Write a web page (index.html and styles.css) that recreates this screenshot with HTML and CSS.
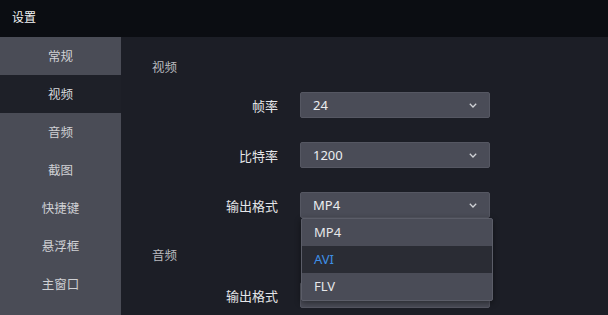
FILE: index.html
```html
<!DOCTYPE html>
<html lang="zh">
<head>
<meta charset="utf-8">
<title>设置</title>
<link rel="stylesheet" href="styles.css">
</head>
<body>
<div class="window">
  <header class="titlebar">设置</header>
  <div class="body">
    <nav class="sidebar">
      <div class="nav-item">常规</div>
      <div class="nav-item active">视频</div>
      <div class="nav-item">音频</div>
      <div class="nav-item">截图</div>
      <div class="nav-item">快捷键</div>
      <div class="nav-item">悬浮框</div>
      <div class="nav-item">主窗口</div>
    </nav>
    <main class="content">
      <section class="section">
        <div class="section-title">视频</div>
        <div class="rows">
          <div class="row">
            <label class="label">帧率</label>
            <div class="select"><span>24</span><svg class="chev" viewBox="0 0 8 5" width="8" height="5"><polyline points="0.8,0.8 4,4 7.2,0.8"/></svg></div>
          </div>
          <div class="row">
            <label class="label">比特率</label>
            <div class="select"><span>1200</span><svg class="chev" viewBox="0 0 8 5" width="8" height="5"><polyline points="0.8,0.8 4,4 7.2,0.8"/></svg></div>
          </div>
          <div class="row">
            <label class="label">输出格式</label>
            <div class="select open"><span>MP4</span><svg class="chev" viewBox="0 0 8 5" width="8" height="5"><polyline points="0.8,0.8 4,4 7.2,0.8"/></svg>
              <ul class="menu">
                <li class="opt">MP4</li>
                <li class="opt hover">AVI</li>
                <li class="opt">FLV</li>
              </ul>
            </div>
          </div>
        </div>
      </section>
      <section class="section second">
        <div class="section-title">音频</div>
        <div class="rows">
          <div class="row">
            <label class="label">输出格式</label>
            <div class="select covered"></div>
          </div>
        </div>
      </section>
    </main>
  </div>
</div>
</body>
</html>
```
FILE: styles.css
```css
* { box-sizing: border-box; }
html, body { margin: 0; padding: 0; }
body {
  width: 608px;
  height: 315px;
  overflow: hidden;
  background: #1c1e26;
  font-family: "Noto Sans", "Noto Sans CJK SC", sans-serif;
  font-size: 13px;
  color: #e2e3e6;
}
.window { display: flex; flex-direction: column; height: 315px; }
.titlebar {
  height: 37px;
  background: #0b0d12;
  color: #f2f2f2;
  font-size: 12px;
  line-height: 35px;
  padding-left: 12px;
  flex: none;
}
.body { display: flex; flex: 1; min-height: 0; }
.sidebar {
  width: 121px;
  flex: none;
  display: flex;
  flex-direction: column;
  background: #4a4c56;
}
.nav-item {
  height: 38px;
  display: flex;
  align-items: center;
  justify-content: center;
  color: #cfd0d4;
  font-size: 12.5px;
  padding-bottom: 2px;
  flex: none;
}
.nav-item.active { background: #1e2028; color: #d8d9dc; }
.content {
  flex: 1;
  padding: 21px 0 0 31px;
  background: #1c1e26;
}
.section-title {
  height: 20px;
  line-height: 20px;
  color: #b9babf;
  font-size: 12.5px;
  margin-bottom: 14px;
}
.rows { display: flex; flex-direction: column; gap: 24px; }
.row { display: flex; align-items: center; gap: 22px; height: 26px; }
.label {
  width: 126px;
  text-align: right;
  color: #e4e5e8;
  font-size: 13px;
}
.select {
  position: relative;
  width: 190px;
  height: 26px;
  background: #4a4c57;
  border: 1px solid #555762;
  border-radius: 2px;
  display: flex;
  align-items: center;
  justify-content: space-between;
  padding: 0 12px 0 12px;
  color: #eceef0;
  font-size: 13px;
}
.chev { fill: none; stroke: #d0d2d6; stroke-width: 1.3; }
.section.second { margin-top: 28px; }
.section.second .section-title { margin-bottom: 16px; }
.menu {
  position: absolute;
  top: 25px;
  left: 0;
  width: 192px;
  margin: 0;
  padding: 0;
  list-style: none;
  background: #4a4c57;
  border: 1px solid #5b5d68;
  border-radius: 2px;
  box-shadow: 0 2px 6px rgba(0,0,0,0.45);
  z-index: 5;
}
.opt {
  height: 27px;
  line-height: 26px;
  padding-left: 12px;
  color: #e6e7ea;
  font-size: 13px;
}
.opt.hover { background: #2a2c34; color: #3e8fe6; }
```
